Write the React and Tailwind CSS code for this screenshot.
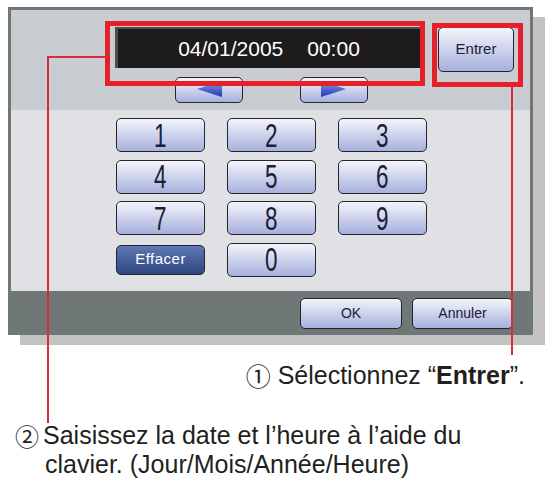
import React from 'react'

const btn =
  'flex items-center justify-center rounded-[5px] border-[1.5px] border-[#24242c] bg-linear-to-b from-[#f4f5fa] to-[#a7b0dd] text-[#1b2034]'

const circled = { fontFamily: '"Noto Sans CJK JP", "DejaVu Sans", sans-serif' }

function Digit({ n }) {
  return (
    <button className={`${btn} h-[34px]`}>
      <span className="inline-block scale-x-[0.68] text-[33px] leading-none">{n}</span>
    </button>
  )
}

function Arrow({ dir }) {
  const pts = dir === 'left' ? '1,9 26,1 26,17' : '25,9 0,1 0,17'
  return (
    <button className={`${btn} w-[68px] h-[26px] items-end pb-[4px]`}>
      <svg width="26" height="18" viewBox="0 0 26 18">
        <defs>
          <linearGradient id={`g-${dir}`} x1="0" y1="1" x2="0" y2="0">
            <stop offset="0" stopColor="#1f39b8" />
            <stop offset="1" stopColor="#8b98e6" />
          </linearGradient>
        </defs>
        <polygon points={pts} fill={`url(#g-${dir})`} />
      </svg>
    </button>
  )
}

export default function App() {
  return (
    <div
      className="relative w-[545px] h-[487px] bg-white overflow-hidden"
      style={{ fontFamily: '"Liberation Sans", Arial, sans-serif' }}
    >
      {/* screen */}
      <div className="ml-[8px] mt-[7px] w-[525px] h-[328px] bg-[#6f7877] px-[3px] pt-[3px] shadow-[12px_10px_0_#c3c3c3]">
        <div className="relative h-[100px] bg-[#c9cdd2] pt-[17px]">
          <div className="flex items-start">
            <div className="ml-[104px] w-[305px] h-[41px] bg-[#1d1b1b] border-l-[3px] border-t-[2px] border-[#4d4d4d] flex items-center justify-center gap-[24px] text-white text-[21px] leading-none font-light">
              <span>04/01/2005</span>
              <span>00:00</span>
            </div>
            <button className={`${btn} ml-[18px] w-[76px] h-[45px] text-[15px]`}>Entrer</button>
          </div>
          <div className="flex mt-[5px] ml-[164px] gap-[57px]">
            <Arrow dir="left" />
            <Arrow dir="right" />
          </div>
          <div className="absolute left-[94px] top-[11px] w-[320px] h-[65px] border-[5px] border-[#e5202b]" />
          <div className="absolute left-[421px] top-[13px] w-[91px] h-[64px] border-[5px] border-[#e5202b]" />
        </div>

        <div className="h-[181px] bg-[#dfe1e4] pt-[8px] pl-[105px]">
          <div className="grid grid-cols-[89px_89px_89px] gap-x-[22px] gap-y-[7.5px]">
            {[1, 2, 3, 4, 5, 6, 7, 8, 9].map((n) => (
              <Digit key={n} n={n} />
            ))}
            <button className="self-center h-[30px] flex items-center justify-center rounded-[5px] border-[1.5px] border-[#24242c] bg-linear-to-b from-[#5d78b4] to-[#2f4680] text-white text-[15px] tracking-[0.5px]">
              Effacer
            </button>
            <Digit n={0} />
          </div>
        </div>

        <div className="h-[44px] flex justify-end gap-[10px] pr-[17px] pt-[7px]">
          <button className={`${btn} w-[102px] h-[31px] text-[14px]`}>OK</button>
          <button className={`${btn} w-[101px] h-[31px] text-[14px]`}>Annuler</button>
        </div>
      </div>

      {/* callout text */}
      <div className="mt-[26px] pr-[20px] flex justify-end items-center text-[25px] leading-[29px] text-[#231f20]">
        <span className="w-[32px] text-[25px] leading-none" style={circled}>①</span>
        <span>
          Sélectionnez “<b>Entrer</b>”.
        </span>
      </div>
      <div className="mt-[31px] pl-[15px] flex items-start text-[25px] leading-[29px] text-[#231f20]">
        <span className="w-[28px] shrink-0 text-[24px] leading-[29px]" style={circled}>②</span>
        <div>
          Saisissez la date et l’heure à l’aide du
          <br />
          <span className="ml-[2px]">clavier. (Jour/Mois/Année/Heure)</span>
        </div>
      </div>

      {/* annotation lines */}
      <div className="absolute left-[48px] top-[56px] w-[57px] h-[1.5px] bg-[#d92b3a]" />
      <div className="absolute left-[47px] top-[56px] w-[1.5px] h-[367px] bg-[#d92b3a]" />
      <div className="absolute left-[511px] top-[87px] w-[1.5px] h-[268px] bg-[#d92b3a]" />
    </div>
  )
}
